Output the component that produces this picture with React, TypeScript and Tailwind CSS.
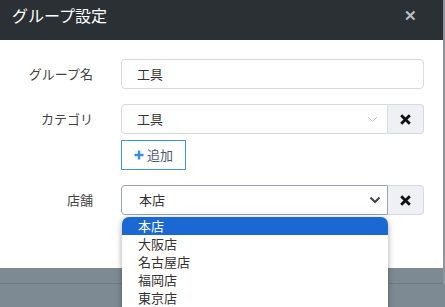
import React from 'react'

const font = { fontFamily: '"Noto Sans CJK JP", "Noto Sans", sans-serif' }

function XIcon() {
  return (
    <svg width="11" height="11" viewBox="0 0 10 10">
      <path d="M2 2 L8 8 M8 2 L2 8" stroke="#111" strokeWidth="2.6" strokeLinecap="square" />
    </svg>
  )
}

function Label({ children }: { children: React.ReactNode }) {
  return <div className="w-[94px] shrink-0 pr-[1px] text-right text-[13px] text-[#444]">{children}</div>
}

export default function App() {
  const stores = ['本店', '大阪店', '名古屋店', '福岡店', '東京店']
  return (
    <div className="relative h-[307px] w-[445px] overflow-hidden bg-[#7e8a93]" style={font}>
      <div className="flex w-[445px]">
        <div className="w-[443px]">
          <div className="bg-white">
            {/* header */}
            <div className="flex h-[40px] items-start justify-between bg-[#2b3035] pl-[12px] pr-[26px] pt-[4px]">
              <span className="text-[16px] leading-[22px] text-white">グループ設定</span>
              <span className="mt-[2px] text-[15px] font-bold leading-[18px] text-[#b9bdc1]">✕</span>
            </div>

            {/* body */}
            <div className="flex h-[228px] flex-col pt-[19px]">
              <div className="flex h-[30px] items-center gap-[27px]">
                <Label>グループ名</Label>
                <div className="flex h-[30px] w-[303px] items-center rounded-[4px] border border-[#d6dae0] pl-[15px] text-[13px] text-[#333]">
                  工具
                </div>
              </div>

              <div className="mt-[15px] flex h-[30px] items-center gap-[27px]">
                <Label>カテゴリ</Label>
                <div className="flex h-[30px] w-[303px]">
                  <div className="flex flex-1 items-center justify-between rounded-l-[4px] border border-[#d6dae0] pl-[15px] pr-[9px] text-[13px] text-[#333]">
                    <span>工具</span>
                    <svg width="11" height="7" viewBox="0 0 11 7">
                      <path d="M1 1 L5.5 5.5 L10 1" fill="none" stroke="#c4c8cd" strokeWidth="1" />
                    </svg>
                  </div>
                  <div className="flex w-[36px] items-center justify-center rounded-r-[4px] border border-l-0 border-[#d6dae0] bg-[#eef0f3]">
                    <XIcon />
                  </div>
                </div>
              </div>

              <div className="mt-[6px] flex gap-[27px]">
                <div className="w-[94px] shrink-0" />
                <div className="flex h-[30px] w-[65px] items-center justify-center gap-[3px] border border-[#3c96e6] text-[13px] text-[#4a5a6e]">
                  <svg width="10" height="10" viewBox="0 0 10 10">
                    <path d="M5 0.5 V9.5 M0.5 5 H9.5" stroke="#3a8fdc" strokeWidth="2.4" />
                  </svg>
                  <span>追加</span>
                </div>
              </div>

              <div className="mt-[15px] flex h-[30px] items-center gap-[27px]">
                <Label>店舗</Label>
                <div className="flex h-[30px] w-[303px]">
                  <div className="flex flex-1 items-center justify-between rounded-l-[4px] border border-[#9aa3ae] pl-[17px] pr-[6px] text-[13px] text-[#333]">
                    <span>本店</span>
                    <svg width="12" height="8" viewBox="0 0 12 8">
                      <path d="M1.5 1.5 L6 6 L10.5 1.5" fill="none" stroke="#444" strokeWidth="2" />
                    </svg>
                  </div>
                  <div className="flex w-[36px] items-center justify-center rounded-r-[4px] border border-l-0 border-[#d6dae0] bg-[#eef0f3]">
                    <XIcon />
                  </div>
                </div>
              </div>
            </div>
          </div>
          <div className="h-[15px]" />
          <div className="h-px bg-[#6f7a83]" />
        </div>
        <div className="w-[2px] bg-[#8a959d]" />
      </div>

      {/* open dropdown list */}
      <div className="absolute left-[122px] top-[217px] w-[266px] overflow-hidden rounded-[7px] bg-white pb-[10px] shadow-[0_2px_6px_rgba(0,0,0,0.35)]">
        {stores.map((s, i) => (
          <div
            key={s}
            className={`h-[18px] pl-[16px] text-[13px] leading-[18px] ${i === 0 ? 'bg-[#1b68d3] text-white' : 'text-[#333]'}`}
          >
            {s}
          </div>
        ))}
      </div>
    </div>
  )
}
